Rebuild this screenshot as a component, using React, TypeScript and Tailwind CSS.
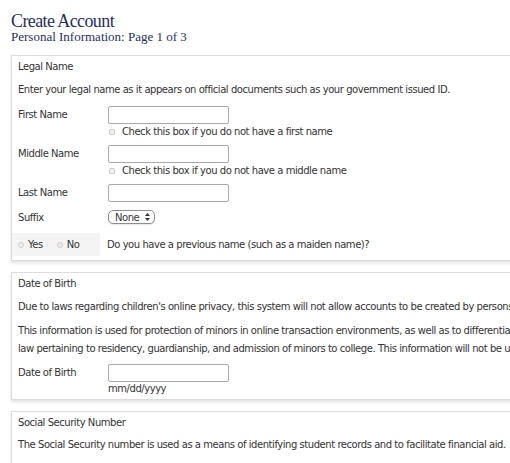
import React from 'react';

const sans = "font-['DejaVu_Sans',Verdana,sans-serif]";

function Card({ children, className = '' }: { children: React.ReactNode; className?: string }) {
  return (
    <div
      className={`ml-[11px] w-[560px] border border-[#dcdcdc] bg-white shadow-[0_2px_3px_rgba(0,0,0,0.12)] ${className}`}
    >
      {children}
    </div>
  );
}

function TextBox() {
  return <div className="h-[18px] w-[121px] rounded-[2px] border border-[#a9a9a9] bg-white" />;
}

function CheckLine({ text }: { text: string }) {
  return (
    <div className="mt-[1px] flex h-[13px] items-center">
      <span className="ml-[1px] mr-[7px] inline-block h-[6px] w-[6px] rounded-[1px] border border-[#cfcfcf] bg-[#efefef]" />
      <span>{text}</span>
    </div>
  );
}

function Radio({ label }: { label: string }) {
  return (
    <span className="flex items-center">
      <span className="mr-[4px] inline-block h-[6px] w-[6px] rounded-full border border-[#cfcfcf] bg-[#eee]" />
      {label}
    </span>
  );
}

export default function App() {
  return (
    <div
      className={`h-[463px] w-[510px] overflow-hidden bg-white text-[10px] leading-[13px] tracking-[-0.45px] text-[#333] ${sans}`}
    >
      <div className="pl-[11px] pt-[12px] font-['Liberation_Serif',serif] tracking-normal text-[#1f2f63]">
        <h1 className="text-[18px] leading-[18px] tracking-[-0.6px]">Create Account</h1>
        <p className="text-[13px] leading-[13px]">Personal Information: Page 1 of 3</p>
      </div>

      <Card className="mt-[12px]">
        <div className="px-[6px] pt-[4px]">
          <p>Legal Name</p>
          <p className="mt-[10px]">
            Enter your legal name as it appears on official documents such as your government issued ID.
          </p>

          <div className="mt-[10px] flex">
            <div className="w-[90px] shrink-0 pt-[2px]">First Name</div>
            <div>
              <TextBox />
              <CheckLine text="Check this box if you do not have a first name" />
            </div>
          </div>

          <div className="mt-[7px] flex">
            <div className="w-[90px] shrink-0 pt-[2px]">Middle Name</div>
            <div>
              <TextBox />
              <CheckLine text="Check this box if you do not have a middle name" />
            </div>
          </div>

          <div className="mt-[7px] flex">
            <div className="w-[90px] shrink-0 pt-[2px]">Last Name</div>
            <TextBox />
          </div>

          <div className="mt-[8px] flex">
            <div className="w-[90px] shrink-0 pt-[1px]">Suffix</div>
            <div className="flex h-[14px] w-[47px] items-center justify-between rounded-[5px] border border-[#8e8e8e] bg-white pl-[6px] pr-[4px] shadow-[0_1px_1px_rgba(0,0,0,0.1)]">
              <span>None</span>
              <svg width="5" height="8" viewBox="0 0 5 8">
                <path d="M2.5 0 L5 3 L0 3 Z M2.5 8 L5 5 L0 5 Z" fill="#333" />
              </svg>
            </div>
          </div>
        </div>

        <div className="mt-[9px] mb-[4px] flex h-[23px] items-center">
          <div className="flex h-full w-[88px] items-center gap-[14px] bg-[#f4f4f4] pl-[6px]">
            <Radio label="Yes" />
            <Radio label="No" />
          </div>
          <div className="pl-[7px]">Do you have a previous name (such as a maiden name)?</div>
        </div>
      </Card>

      <Card className="mt-[11px]">
        <div className="px-[6px] pb-[4px] pt-[4px]">
          <p>Date of Birth</p>
          <p className="mt-[10px] whitespace-nowrap">
            Due to laws regarding children's online privacy, this system will not allow accounts to be created by persons under the age of 13.
          </p>
          <p className="mt-[11px] whitespace-nowrap">
            This information is used for protection of minors in online transaction environments, as well as to differentiate
          </p>
          <p className="mt-[5px] whitespace-nowrap">
            law pertaining to residency, guardianship, and admission of minors to college. This information will not be used
          </p>
          <div className="mt-[9px] flex">
            <div className="w-[90px] shrink-0 pt-[2px]">Date of Birth</div>
            <div>
              <TextBox />
              <div>mm/dd/yyyy</div>
            </div>
          </div>
        </div>
      </Card>

      <Card className="mt-[11px]">
        <div className="px-[6px] pb-[20px] pt-[4px]">
          <p>Social Security Number</p>
          <p className="mt-[9px]">
            The Social Security number is used as a means of identifying student records and to facilitate financial aid.
          </p>
        </div>
      </Card>
    </div>
  );
}
